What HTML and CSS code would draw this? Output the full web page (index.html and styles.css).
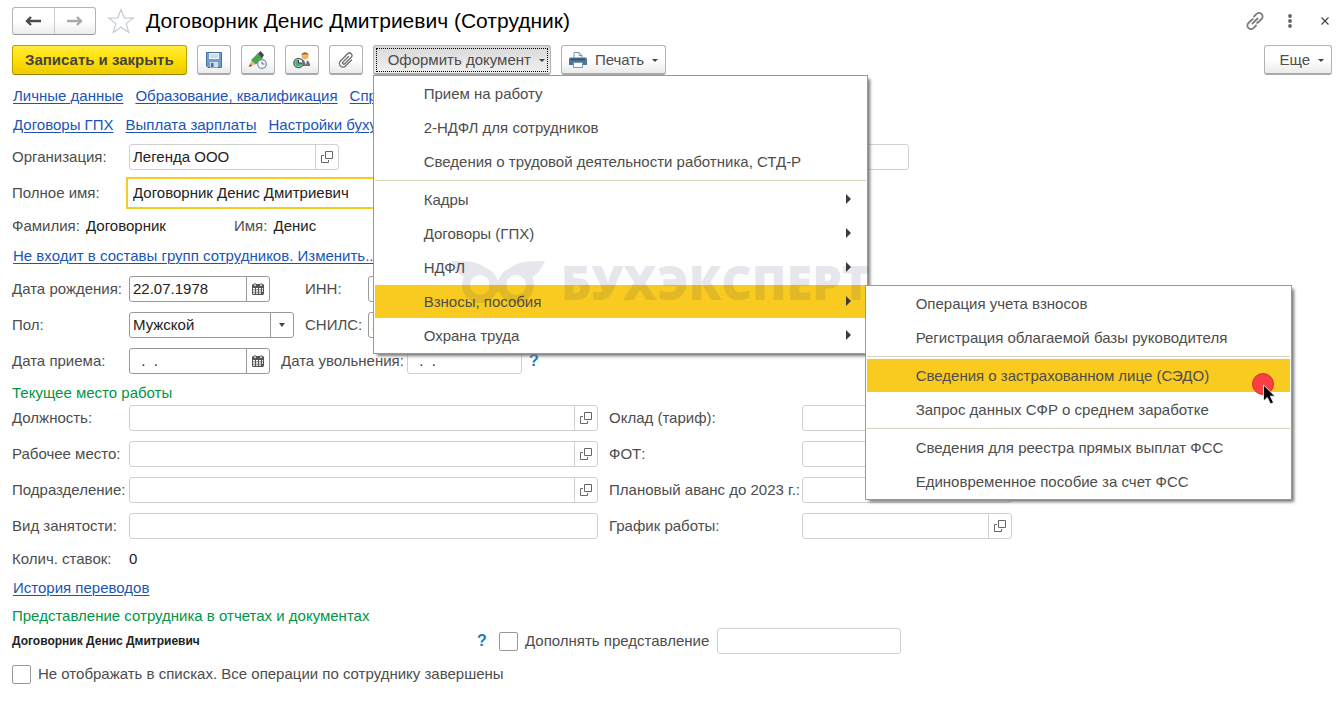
FILE: index.html
```html
<!DOCTYPE html>
<html lang="ru">

<head>
    <meta charset="UTF-8">
    <meta name="viewport" content="width=device-width, initial-scale=1.0">
    <title>Договорник Денис Дмитриевич (Сотрудник)</title>
    <link rel="stylesheet" href="styles.css">
</head>

<body>
    <!-- Shared icons -->
    <svg class="sprite" aria-hidden="true">
        <symbol id="i-open" viewBox="0 0 12 12">
            <path d="M4.500.5h7v7h-7zM3 4.500H.5v7h7V9" fill="none" stroke="#666" stroke-width="1"/>
        </symbol>
        <symbol id="i-calendar" viewBox="0 0 12 12">
            <path d="M1 1h10l1 1v9l-1 1H1l-1-1V2z" fill="#555"/>
            <path d="M3 0v3M9 0v3" stroke="#fff" stroke-width="2"/>
            <path d="M3 0v2.500M9 0v2.500" stroke="#4a4a4a" stroke-width="1"/>
            <path d="M1 5h2v1.500H1zM4 5h2v1.500H4zM7 5h2v1.500H7zM10 5h1v1.500h-1zM1 7.200h2v1.500H1zM4 7.200h2v1.500H4zM7 7.200h2v1.500H7zM10 7.200h1v1.500h-1zM1 9.400h2v1.300H1zM4 9.400h2v1.300H4zM7 9.400h2v1.300H7z" fill="#fff"/>
        </symbol>
    </svg>

    <header class="title-bar">
        <div class="nav-buttons">
            <button type="button" aria-label="Назад"><svg width="16" height="10" viewBox="0 0 16 10"><path d="M6 1L2 5l4 4M2.500 5H16" fill="none" stroke="#4a4a4a" stroke-width="2.400"/></svg></button>
            <button type="button" aria-label="Вперед"><svg width="16" height="10" viewBox="0 0 16 10"><path d="M10 1l4 4-4 4M13.500 5H0" fill="none" stroke="#aaa" stroke-width="2.400"/></svg></button>
        </div>
        <button type="button" class="plain" aria-label="В избранное"><svg width="28" height="26" viewBox="0 0 28 26"><path d="M14 1.500l3.200 8.300 9 .3-7 5.500 2.500 8.700L14 19.300l-7.700 5 2.500-8.700-7-5.500 9-.3z" fill="#fff" stroke="#c3cad3" stroke-width="1.200"/></svg></button>
        <h1>Договорник Денис Дмитриевич (Сотрудник)</h1>
        <div class="window-tools">
            <button type="button" class="plain" aria-label="Ссылка"><svg width="18" height="18" viewBox="0 0 18 18"><g fill="none" stroke="#7d7d7d" stroke-width="1.800" stroke-linecap="round"><path d="M8 4.500l2.500-2.500a3.300 3.300 0 0 1 5 0 3.300 3.300 0 0 1 0 5L12.500 10a3 3 0 0 1-1.500.8"/><path d="M10 13.500L7.500 16a3.300 3.300 0 0 1-5 0 3.300 3.300 0 0 1 0-5L5.500 8A3 3 0 0 1 7 7.200"/><path d="M6.500 11.500l5-5"/></g></svg></button>
            <button type="button" class="plain" aria-label="Меню"><svg width="18" height="14" viewBox="0 0 18 14"><g fill="#666"><circle cx="9" cy="2" r="1.900"/><circle cx="9" cy="7" r="1.900"/><circle cx="9" cy="12" r="1.900"/></g></svg></button>
            <button type="button" class="plain" aria-label="Закрыть"><svg width="8" height="8" viewBox="0 0 8 8"><path d="M.5.5l7 7M7.500.5l-7 7" stroke="#444" stroke-width="1.200"/></svg></button>
        </div>
    </header>

    <div class="command-bar">
        <button type="button" class="btn btn-main">Записать и закрыть</button>
        <button type="button" class="btn btn-icon" aria-label="Записать">
            <svg width="16" height="16" viewBox="0 0 16 16"><path d="M.5.5h15v15H2l-1.500-1.500z" fill="#6f9fd0" stroke="#44709f"/><path d="M3 1h10v6H3z" fill="#eef3f8"/><path d="M4 3h8M4 5h8" stroke="#b4c3d3"/><path d="M4 10h8v5.500H4z" fill="#d4dce5"/><path d="M5 11h2.500v4H5z" fill="#44709f"/></svg>
        </button>
        <button type="button" class="btn btn-icon" aria-label="Изменить отложенно">
            <svg width="18" height="18" viewBox="0 0 18 18"><path d="M0 16l2.500-7L7 13z" fill="#e9b871"/><path d="M0 16l1-3 2 1.800z" fill="#4a4a4a"/><path d="M2.500 9L9 2.500 13.500 7 7 13z" fill="#45a847" stroke="#33803a" stroke-width=".6"/><path d="M9 2.500L11.500 0 15 4l-2 3z" fill="#3f4752"/><circle cx="13" cy="13" r="4.300" fill="#f5f9fc" stroke="#7890a8" stroke-width="1.200"/><path d="M13 10.500V13h2.500" fill="none" stroke="#556c84"/></svg>
        </button>
        <button type="button" class="btn btn-icon" aria-label="Кадровая история">
            <svg width="18" height="18" viewBox="0 0 18 18"><path d="M8 15c0-5 1-6 4-6s5 2 5 6z" fill="#66717d"/><path d="M11 9h3l-1 5z" fill="#fff"/><circle cx="12" cy="5" r="3.500" fill="#efb45f"/><path d="M8.500 4C9 .5 15 .5 15.500 4 13 2.500 11 2.500 8.500 4z" fill="#785536"/><circle cx="5.500" cy="12" r="4.600" fill="#fff" stroke="#50667a" stroke-width="1.500"/><path d="M5.500 8.500V12H9a3.500 3.500 0 0 1-3.500 3.500A3.500 3.500 0 0 1 5.500 8.500z" fill="#45b65a"/><path d="M5.500 9v3H9" fill="none" stroke="#334"/></svg>
        </button>
        <button type="button" class="btn btn-icon" aria-label="Присоединенные файлы">
            <svg width="16" height="16" viewBox="0 0 16 16"><path d="M10.500 4.500L5 10a1.200 1.200 0 0 0 1.800 1.800l6.400-6.500a2.500 2.500 0 0 0-3.600-3.600L2.500 9a3.500 3.500 0 0 0 5 5l6-6" fill="none" stroke="#6f6f6f" stroke-width="1.300" stroke-linecap="round"/></svg>
        </button>

        <div class="dropdown">
            <button type="button" class="btn btn-open" aria-expanded="true">Оформить документ<span class="caret"></span></button>
            <ul class="menu">
                <li><button type="button">Прием на работу</button></li>
                <li><button type="button">2-НДФЛ для сотрудников</button></li>
                <li><button type="button">Сведения о трудовой деятельности работника, СТД-Р</button></li>
                <li class="separator"></li>
                <li class="has-sub"><button type="button">Кадры</button></li>
                <li class="has-sub"><button type="button">Договоры (ГПХ)</button></li>
                <li class="has-sub"><button type="button">НДФЛ</button></li>
                <li class="has-sub">
                    <button type="button" class="active">Взносы, пособия</button>
                    <ul class="menu submenu">
                        <li><button type="button">Операция учета взносов</button></li>
                        <li><button type="button">Регистрация облагаемой базы руководителя</button></li>
                        <li class="separator"></li>
                        <li>
                            <button type="button" class="active">Сведения о застрахованном лице (СЭДО)</button>
                            <svg class="pointer" width="26" height="34" viewBox="0 0 26 34" aria-hidden="true"><circle cx="11" cy="11" r="10.500" fill="#fb4044" stroke="#d62f35"/><path d="M11.500 12v16l3.800-3.500 3.200 6.500 3-1.500-3.200-6.300H23z" fill="#000" stroke="#fff" stroke-width=".8"/></svg>
                        </li>
                        <li><button type="button">Запрос данных СФР о среднем заработке</button></li>
                        <li class="separator"></li>
                        <li><button type="button">Сведения для реестра прямых выплат ФСС</button></li>
                        <li><button type="button">Единовременное пособие за счет ФСС</button></li>
                    </ul>
                </li>
                <li class="has-sub"><button type="button">Охрана труда</button></li>
                <li class="watermark" aria-hidden="true">
                    <svg width="94" height="42" viewBox="0 0 94 42">
                        <g fill="none" stroke="#1e1950" stroke-width="8"><circle cx="29" cy="24" r="14"/><circle cx="65" cy="24" r="14"/></g>
                        <path d="M0 0c16 0 30 0 38 10l-8 4-17 2C7 13 3 7 0 0zM94 0C78 0 64 0 56 10l8 4 17 2c6-3 10-9 13-16zM38 12l9 8 9-8v16l-9 3-9-3z" fill="#1e1950"/>
                    </svg>
                    <span>БУХЭКСПЕРТ</span>
                </li>
            </ul>
        </div>

        <button type="button" class="btn">
            <svg width="18" height="16" viewBox="0 0 18 16"><path d="M5 6V.5h5L13 3.500V6" fill="#fff" stroke="#8796a6"/><path d="M10 .5v3h3" fill="none" stroke="#8796a6"/><path d="M1 5.500h16l1 1V13H0V6.500z" fill="#4b759d"/><path d="M2 7.500h14" stroke="#2e5377" stroke-width="1.500"/><path d="M4.500 10.500h9v5h-9z" fill="#fff" stroke="#8796a6"/></svg>
            Печать<span class="caret"></span>
        </button>
        <button type="button" class="btn btn-more">Еще<span class="caret"></span></button>
    </div>

    <nav class="links">
        <a href="#">Личные данные</a>
        <a href="#">Образование, квалификация</a>
        <a href="#">Справки</a>
    </nav>
    <nav class="links">
        <a href="#">Договоры ГПХ</a>
        <a href="#">Выплата зарплаты</a>
        <a href="#">Настройки бухучета</a>
    </nav>

    <form class="form">
        <div class="row">
            <label for="org" class="lead">Организация:</label>
            <div class="field w-ref"><input type="text" id="org" value="Легенда ООО"><button type="button" aria-label="Открыть"><svg width="12" height="12"><use href="#i-open"/></svg></button></div>
            <div class="field w-number"><input type="text" aria-label="Номер"></div>
        </div>
        <div class="row">
            <label for="fullname" class="lead">Полное имя:</label>
            <div class="field w-wide focused"><input type="text" id="fullname" value="Договорник Денис Дмитриевич"></div>
        </div>
        <div class="row text-row">
            <span class="name-part">Фамилия: <b>Договорник</b></span>
            <span>Имя: <b>Денис</b></span>
        </div>
        <div class="row text-row"><a href="#">Не входит в составы групп сотрудников. Изменить...</a></div>

        <div class="person">
            <label for="birth">Дата рождения:</label>
            <div class="field required w-date"><input type="text" id="birth" value="22.07.1978"><button type="button" aria-label="Календарь"><svg width="12" height="12"><use href="#i-calendar"/></svg></button></div>
            <label for="inn" class="second">ИНН:</label>
            <div class="field required"><input type="text" id="inn"></div>
            <label for="sex">Пол:</label>
            <div class="field required"><select id="sex"><option>Мужской</option></select><span class="select-arrow"></span></div>
            <label for="snils" class="second">СНИЛС:</label>
            <div class="field required"><input type="text" id="snils" class="warn" value="2"></div>
        </div>
        <div class="row">
            <label for="hired" class="lead">Дата приема:</label>
            <div class="field required w-date"><input type="text" id="hired" value="  .  ."><button type="button" aria-label="Календарь"><svg width="12" height="12"><use href="#i-calendar"/></svg></button></div>
            <label for="fired" class="second">Дата увольнения:</label>
            <div class="field w-fired"><input type="text" id="fired" value="  .  ."></div>
            <button type="button" class="help">?</button>
        </div>

        <h2>Текущее место работы</h2>
        <div class="job">
            <label for="position">Должность:</label>
            <div class="field"><input type="text" id="position"><button type="button" aria-label="Открыть"><svg width="12" height="12"><use href="#i-open"/></svg></button></div>
            <label for="salary" class="second">Оклад (тариф):</label>
            <div class="field"><input type="text" id="salary"></div>

            <label for="workplace">Рабочее место:</label>
            <div class="field"><input type="text" id="workplace"><button type="button" aria-label="Открыть"><svg width="12" height="12"><use href="#i-open"/></svg></button></div>
            <label for="fot" class="second">ФОТ:</label>
            <div class="field"><input type="text" id="fot"></div>

            <label for="unit">Подразделение:</label>
            <div class="field"><input type="text" id="unit"><button type="button" aria-label="Открыть"><svg width="12" height="12"><use href="#i-open"/></svg></button></div>
            <label for="advance" class="second">Плановый аванс до 2023 г.:</label>
            <div class="field"><input type="text" id="advance"></div>

            <label for="kind">Вид занятости:</label>
            <div class="field"><input type="text" id="kind"></div>
            <label for="schedule" class="second">График работы:</label>
            <div class="field"><input type="text" id="schedule"><button type="button" aria-label="Открыть"><svg width="12" height="12"><use href="#i-open"/></svg></button></div>
        </div>
        <div class="row text-row"><span class="lead">Колич. ставок:</span><b>0</b></div>
        <div class="row history"><a href="#">История переводов</a></div>

        <h2>Представление сотрудника в отчетах и документах</h2>
        <div class="row">
            <strong class="short-name">Договорник Денис Дмитриевич</strong>
            <button type="button" class="help">?</button>
            <input type="checkbox" id="extend"><label for="extend">Дополнять представление</label>
            <div class="field w-extend"><input type="text" aria-label="Дополнение представления"></div>
        </div>
        <div class="row text-row">
            <input type="checkbox" id="hide"><label for="hide">Не отображать в списках. Все операции по сотруднику завершены</label>
        </div>
    </form>
</body>

</html>
```
FILE: styles.css
```css
* {
    box-sizing: border-box;
}

body {
    margin: 0;
    padding: 7px 8px 7px 12px;
    background: #fff;
    color: #4d4d4d;
    font-family: "Liberation Sans", Arial, sans-serif;
    font-size: 15px;
    line-height: 20px;
}

button,
input,
select {
    font: inherit;
    color: inherit;
    margin: 0;
}

button {
    padding: 0;
    border: none;
    background: none;
}

label {
    white-space: nowrap;
}

a {
    color: #1a55b5;
    text-underline-offset: 2px;
    text-decoration-thickness: 1px;
}

.sprite {
    display: none;
}

/* Title bar */
.title-bar {
    display: flex;
    align-items: center;
    height: 28px;
    gap: 11px;
}

.title-bar h1 {
    margin: 0;
    color: #000;
    font-size: 21px;
    font-weight: normal;
    line-height: 28px;
}

.plain {
    display: flex;
}

.nav-buttons {
    display: flex;
    width: 84px;
    height: 28px;
    border: 1px solid #b3b3b3;
    border-bottom-color: #999;
    border-radius: 3px;
    background: linear-gradient(#fff 50%, #ececec);
}

.nav-buttons button {
    display: flex;
    flex: 1;
    align-items: center;
    justify-content: center;
}

.nav-buttons button + button {
    border-left: 1px solid #ccc;
}

.window-tools {
    display: flex;
    align-items: center;
    gap: 17px;
    margin-left: auto;
}

.window-tools .plain:last-child {
    margin: 0 3px 0 5px;
}

/* Command bar */
.command-bar {
    display: flex;
    gap: 10px;
    margin: 10px 0 6px;
}

.btn {
    display: flex;
    align-items: center;
    justify-content: center;
    height: 30px;
    padding: 0 7px;
    border: 1px solid #b3b3b3;
    border-bottom: 2px solid #aaa;
    border-radius: 3px;
    background: linear-gradient(#fff 50%, #ebebeb);
    white-space: nowrap;
}

.btn > svg {
    flex: none;
}

.btn:not(.btn-icon) > svg {
    margin-right: 8px;
}

.btn-main {
    padding: 0 12px;
    border: 1px solid #b9a100;
    border-bottom-color: #998500;
    background: linear-gradient(#ffec3d, #ffdf00 50%, #edcb00);
    color: #444;
    font-weight: bold;
}

.btn-icon {
    width: 34px;
    padding: 0;
}

.btn-open {
    padding: 0 5px 0 14px;
    background: linear-gradient(#d9d9d9, #f0f0f0);
    outline: 1px dotted #000;
    outline-offset: -4px;
}

.btn-more {
    margin-left: auto;
    padding-left: 14px;
}

.caret {
    margin: 2px 0 0 8px;
    border: 3px solid transparent;
    border-top-color: #444;
    border-bottom: none;
}

/* Drop-down menus */
.dropdown {
    position: relative;
}

.menu {
    position: absolute;
    z-index: 2;
    top: 100%;
    left: 0;
    width: 495px;
    margin: 0;
    padding: 1px 1px 0;
    border: 1px solid #999;
    background: #fff;
    box-shadow: 3px 3px 3px -1px #777;
    list-style: none;
}

.menu li {
    position: relative;
    padding-bottom: 1px;
}

.menu button {
    display: block;
    width: 100%;
    height: 33px;
    padding: 0 49px;
    text-align: left;
    white-space: nowrap;
}

.menu .active {
    background: #f9cb20;
}

.menu .separator {
    height: 1px;
    margin: 1px 0 2px;
    padding: 0;
    background: #d8d3bd;
}

.has-sub > button::after {
    content: "";
    position: absolute;
    top: 11px;
    right: 15px;
    border: 5px solid transparent;
    border-left-color: #3c3c3c;
    border-right: none;
}

.submenu {
    top: 0;
    left: calc(100% - 1px);
    z-index: 3;
    width: 427px;
}

.pointer {
    position: absolute;
    top: 14px;
    right: 12px;
    z-index: 1;
}

.menu .watermark {
    position: absolute;
    top: 185px;
    left: 77px;
    z-index: 1;
    display: flex;
    align-items: center;
    gap: 16px;
    color: #1e1950;
    font: 800 47px/42px "Open Sans", "Noto Sans", sans-serif;
    opacity: 0.1;
    pointer-events: none;
}

/* Form */
.links {
    display: flex;
    gap: 12px;
    padding: 0 1px;
    line-height: 29px;
}

.form {
    display: flex;
    flex-direction: column;
    gap: 10px;
    margin-top: 5px;
}

.row {
    display: flex;
    align-items: center;
}

.row b {
    color: #222;
    font-weight: normal;
}

.row > a {
    margin-left: 1px;
}

.text-row {
    height: 20px;
}

.history {
    height: 18px;
}

.lead {
    width: 117px;
}

.second {
    padding-left: 11px;
}

.name-part {
    width: 222px;
}

.name-part b,
.name-part + span b {
    margin-left: 2px;
}

.form h2 {
    margin: -3px 0 -9px;
    color: #009646;
    font-size: 15px;
    font-weight: normal;
    line-height: 23px;
}

.person,
.job {
    display: grid;
    grid-template-columns: 117px 165px 74px 200px;
    align-items: center;
    gap: 10px 0;
}

.job {
    grid-template-columns: 117px minmax(200px, 469px) 204px 210px;
}

.field {
    display: flex;
    height: 26px;
    border: 1px solid #d0d0d0;
    border-radius: 3px;
    background: #fff;
    color: #222;
}

.required {
    border-color: #999;
}

.focused {
    border-color: transparent;
    outline: 2px solid #f9cb20;
    outline-offset: 1px;
    border-radius: 0;
}

.field input,
.field select {
    flex: 1;
    min-width: 0;
    padding: 0 3px;
    border: none;
    outline: none;
    background: none;
    appearance: none;
}

.field .warn {
    color: #f59a23;
}

.field button,
.select-arrow {
    display: flex;
    flex: none;
    align-items: center;
    justify-content: center;
    width: 23px;
    border-left: 1px solid #d0d0d0;
}

.required button,
.select-arrow {
    border-color: #999;
}

.select-arrow::after {
    content: "";
    border: 3px solid transparent;
    border-top: 4px solid #444;
    border-bottom: none;
}

.w-ref {
    width: 210px;
}

.w-number {
    width: 187px;
    margin-left: 383px;
}

.w-wide {
    width: 469px;
}

.w-date {
    width: 141px;
}

.w-fired {
    width: 115px;
    margin-left: 3px;
}

.w-extend {
    width: 184px;
    margin-left: 8px;
}

.help {
    width: 10px;
    margin: 0 12px 0 7px;
    color: #1a7abf;
    font-size: 16px;
    font-weight: bold;
}

.short-name {
    width: 458px;
    color: #222;
    font-size: 12px;
}

input[type="checkbox"] {
    width: 19px;
    height: 19px;
    margin-right: 7px;
    border: 1px solid #999;
    border-radius: 2px;
    background: #fff;
    appearance: none;
}
```
